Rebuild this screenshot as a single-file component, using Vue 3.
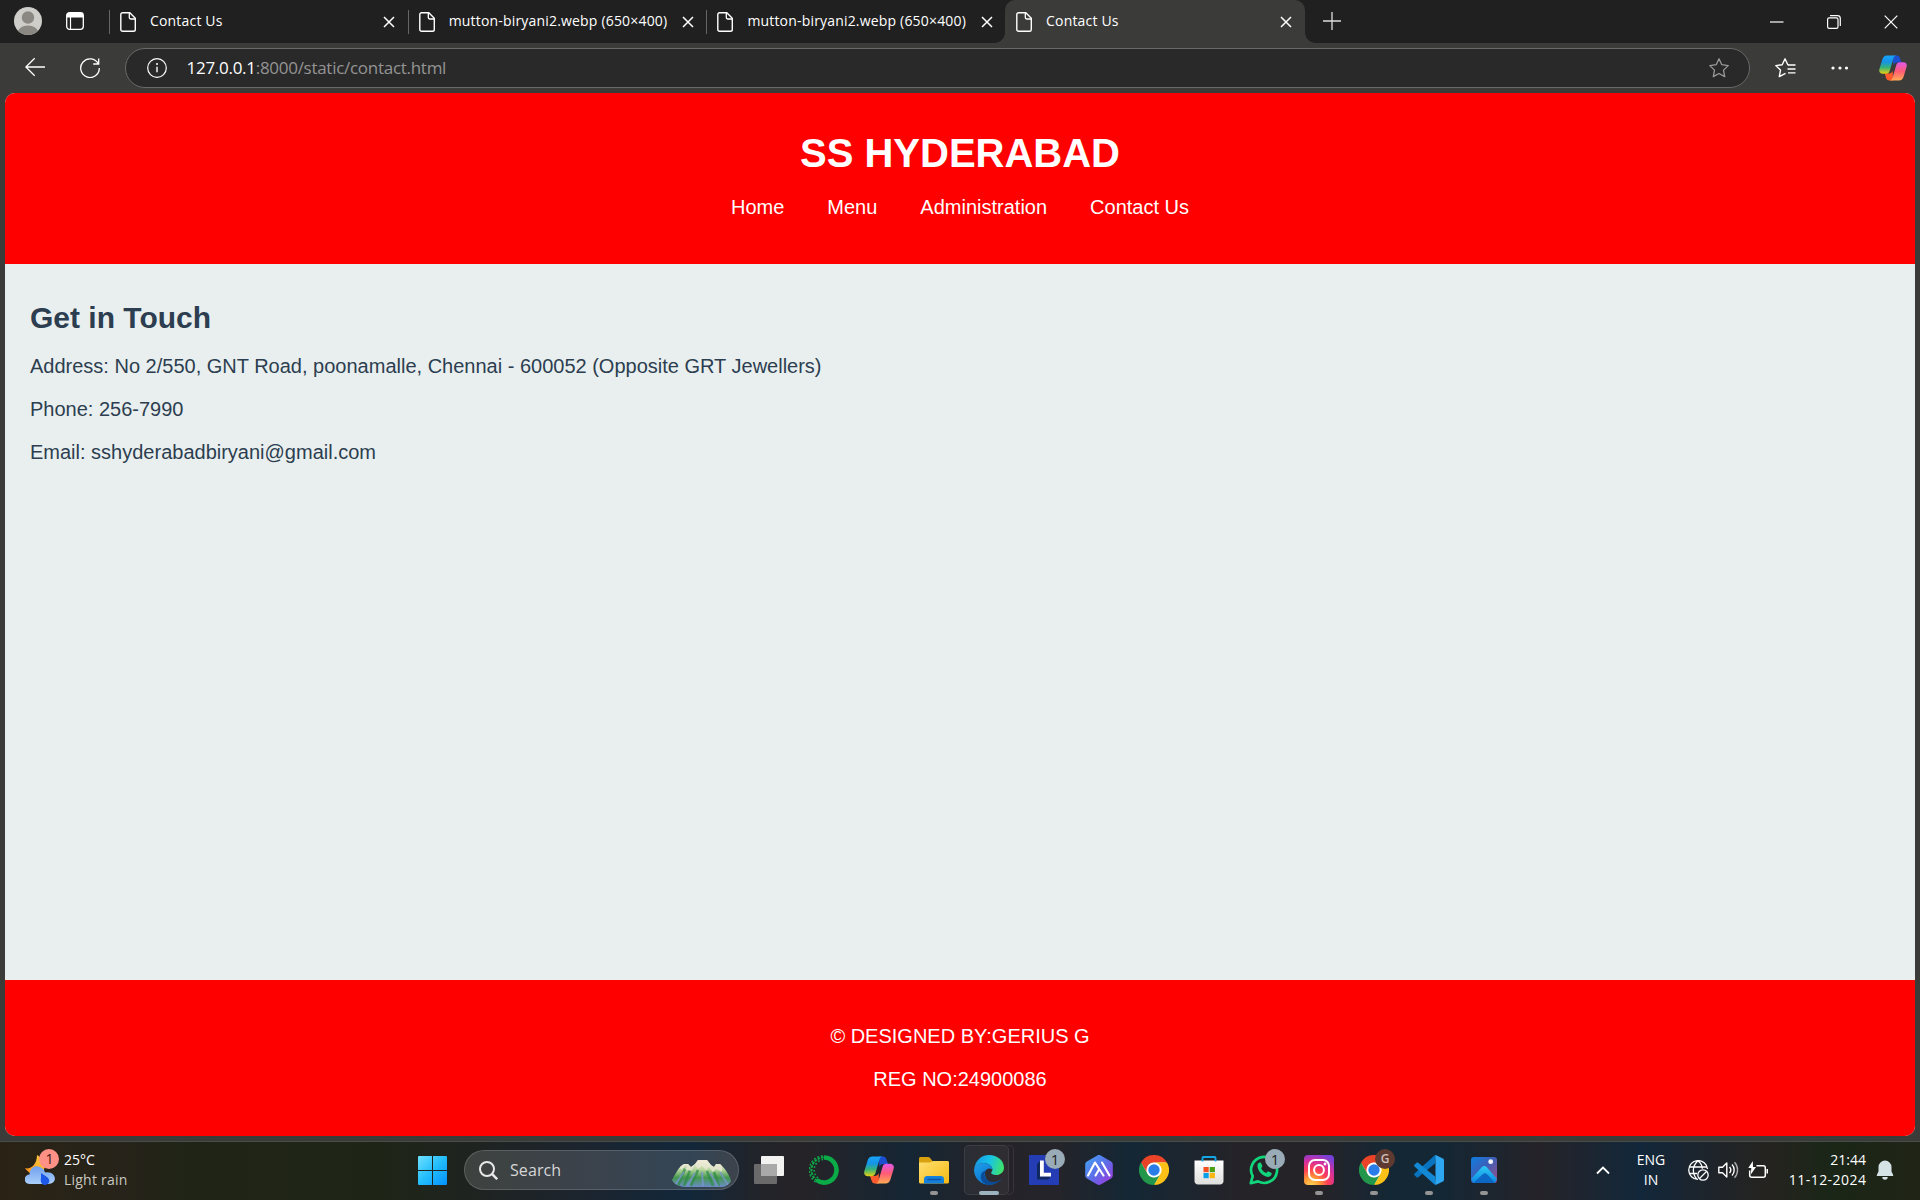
<script setup>
const tabs = [
  { title: 'Contact Us', short: true },
  { title: 'mutton-biryani2.webp (650×400)' },
  { title: 'mutton-biryani2.webp (650×400)' },
  { title: 'Contact Us', short: true, active: true },
]
const links = ['Home', 'Menu', 'Administration', 'Contact Us']
const details = [
  'Address: No 2/550, GNT Road, poonamalle, Chennai - 600052 (Opposite GRT Jewellers)',
  'Phone: 256-7990',
  'Email: sshyderabadbiryani@gmail.com',
]
const apps = [
  { id: 'taskview' },
  { id: 'ring' },
  { id: 'copilot' },
  { id: 'folder', open: true },
  { id: 'edge', active: true },
  { id: 'lapp', badge: '1' },
  { id: 'hex' },
  { id: 'chrome' },
  { id: 'store' },
  { id: 'whatsapp', badge: '1' },
  { id: 'instagram', open: true },
  { id: 'chrome', open: true, badge: 'G', brown: true },
  { id: 'vscode', open: true },
  { id: 'photos', open: true },
]
</script>

<template>
  <div class="screen">
    <svg class="defs" width="0" height="0" aria-hidden="true">
      <defs>
        <linearGradient id="cpA" x1="0" y1="0" x2="0" y2="1">
          <stop offset="0" stop-color="#18a4f8" /><stop offset=".35" stop-color="#1593e8" />
          <stop offset=".65" stop-color="#35b37a" /><stop offset="1" stop-color="#e8cf10" />
        </linearGradient>
        <linearGradient id="cpB" x1="0" y1="1" x2="0" y2="0">
          <stop offset="0" stop-color="#ffac55" /><stop offset=".5" stop-color="#ff5c74" />
          <stop offset="1" stop-color="#e058e8" />
        </linearGradient>
        <linearGradient id="winG" x1="0" y1="0" x2="1" y2="1">
          <stop offset="0" stop-color="#6fe0ff" /><stop offset=".5" stop-color="#22bdfc" /><stop offset="1" stop-color="#0491ff" />
        </linearGradient>
        <linearGradient id="foldG" x1="0" y1="0" x2="1" y2="1">
          <stop offset="0" stop-color="#ffdf70" /><stop offset="1" stop-color="#f4b913" />
        </linearGradient>
        <linearGradient id="edgeA" x1="0" y1=".3" x2="1" y2=".5">
          <stop offset="0" stop-color="#1698e8" /><stop offset=".5" stop-color="#18c3e6" />
          <stop offset="1" stop-color="#3fe36a" />
        </linearGradient>
        <linearGradient id="edgeB" x1="0" y1="0" x2=".6" y2="1">
          <stop offset="0" stop-color="#1fa0ea" /><stop offset="1" stop-color="#0a6fcc" />
        </linearGradient>
        <linearGradient id="hexG" x1="0" y1="0" x2="1" y2="1">
          <stop offset="0" stop-color="#42a8f5" /><stop offset=".5" stop-color="#5c6ee8" />
          <stop offset="1" stop-color="#a632dd" />
        </linearGradient>
        <linearGradient id="storeG" x1="0" y1="0" x2="0" y2="1">
          <stop offset="0" stop-color="#ffffff" /><stop offset="1" stop-color="#dededc" />
        </linearGradient>
        <radialGradient id="instaG" cx=".25" cy="1.02" r="1.1">
          <stop offset="0" stop-color="#ffd65c" /><stop offset=".25" stop-color="#ff9a35" />
          <stop offset=".5" stop-color="#ff3e55" /><stop offset=".75" stop-color="#d42f9f" />
          <stop offset="1" stop-color="#7940d8" />
        </radialGradient>
        <linearGradient id="photoG" x1="0" y1="0" x2="1" y2="1">
          <stop offset="0" stop-color="#0c7ee0" /><stop offset=".45" stop-color="#3c5fb9" />
          <stop offset="1" stop-color="#a04e85" />
        </linearGradient>
        <linearGradient id="hillG" x1="0" y1="0" x2="0" y2="1">
          <stop offset="0" stop-color="#2ecaf2" /><stop offset="1" stop-color="#0b86e4" />
        </linearGradient>
        <linearGradient id="cloudG" x1="0" y1="0" x2="0" y2="1">
          <stop offset="0" stop-color="#6f9fee" /><stop offset="1" stop-color="#a9cffb" />
        </linearGradient>
        <linearGradient id="mtG" x1="0" y1="0" x2="0" y2="1">
          <stop offset="0" stop-color="#f4f0dc" /><stop offset=".35" stop-color="#b8d6a0" />
          <stop offset=".65" stop-color="#45984f" /><stop offset="1" stop-color="#6b8cc8" />
        </linearGradient>
        <clipPath id="mtClip"><path d="M0 20C3 14 6 9 9 6l3-2h4l3 3 4-3 3-4h9l4 5 3 2 2-3h4l4 4c3 4 6 8 7 13-2 4-6 6-10 6H12C6 26 2 24 0 20z" /></clipPath>
        <linearGradient id="moonG" x1="0" y1="1" x2="1" y2="0">
          <stop offset="0" stop-color="#ff8d1c" /><stop offset="1" stop-color="#ffd23a" />
        </linearGradient>
        <clipPath id="avClip"><circle cx="14" cy="14" r="14" /></clipPath>

        <symbol id="i-doc" viewBox="0 0 16 20">
          <path d="M2.6.7h7.2l5.5 5.6v11.2c0 1-.8 1.8-1.8 1.8H2.6c-1 0-1.8-.8-1.8-1.8v-15C.8 1.500 1.600.7 2.6.7z" fill="none" stroke="#fff" stroke-width="1.400" />
          <path d="M9.300 1v4.600c0 .8.5 1.400 1.400 1.400h4.400" fill="none" stroke="#fff" stroke-width="1.300" />
        </symbol>
        <symbol id="i-x" viewBox="0 0 12 12">
          <path d="M1 1l10 10M11 1L1 11" stroke="#fff" stroke-width="1.500" />
        </symbol>

        <symbol id="i-copilot" viewBox="0 0 30 28">
          <path d="M15 .5h4c2 0 3 1 3.500 3L24 8h-4.500c-2 0-3.500 1-4.200 3z" fill="#1c4fd0" />
          <path d="M15 27.500h-4c-2 0-3-1-3.500-3L6 20h4.500c2 0 3.500-1 4.200-3z" fill="#fb5a2c" />
          <path d="M8.500.5H19c-2 0-3 1-3.700 3.500L11.500 17c-.6 2-1.700 3.200-4 3.200H4c-3 0-4.500-2-3.600-5.200L3.600 4.500C4.400 2 6 .5 8.500.5z" fill="url(#cpA)" />
          <path d="M21.500 27.500H11c2 0 3-1 3.700-3.500L18.500 11c.6-2 1.700-3.200 4-3.200H26c3 0 4.500 2 3.600 5.200l-3.200 10.500c-.8 2.500-2.400 4-4.900 4z" fill="url(#cpB)" />
        </symbol>

        <symbol id="i-taskview" viewBox="0 0 30 30">
          <rect x="7" y="1" width="23" height="20" rx="1" fill="#f2f2f0" />
          <rect x="0" y="9" width="23" height="20" rx="1" fill="#777" fill-opacity=".85" />
          <rect x="7" y="9" width="16" height="12" fill="#a9a9a9" />
        </symbol>
        <symbol id="i-ring" viewBox="0 0 30 30">
          <path d="M15 2.500A12.500 12.500 0 1 1 7.500 25" fill="none" stroke="#0bab47" stroke-width="4.600" />
          <path d="M8 25.400A12.500 12.500 0 0 1 15 2.500" fill="none" stroke="#0bab47" stroke-width="2" stroke-dasharray="2.500 1.100" />
          <path d="M6.600 27A14.300 14.300 0 0 1 15 .9" fill="none" stroke="#0bab47" stroke-width="1.500" stroke-dasharray="2 1.700" />
          <path d="M9 23A10.500 10.500 0 0 1 14 4.500" fill="none" stroke="#0bab47" stroke-width="1.500" stroke-dasharray="1.700 2" />
        </symbol>
        <symbol id="i-folder" viewBox="0 0 30 30">
          <path d="M0 3.500C0 2.700.7 2 1.500 2h7.700c.7 0 1.200.3 1.700.8L13.500 6v6H0z" fill="#d9a010" />
          <path d="M0 7.500h11l3-1.500h14.500c.8 0 1.500.7 1.500 1.500V27c0 .8-.7 1.500-1.500 1.500h-27C.7 28.500 0 27.800 0 27z" fill="url(#foldG)" />
          <path d="M5 28.500V24c0-1.700 1.300-3 3-3h14c1.700 0 3 1.300 3 3v4.500z" fill="#1480dc" />
          <path d="M9 24.500h12.500" stroke="#0b55a4" stroke-width="1.400" stroke-linecap="round" />
        </symbol>
        <symbol id="i-edge" viewBox="0 0 30 30">
          <path d="M.2 15C.8 6 7 0 15 0c8.600 0 15 5.700 15 12.700 0 4.300-3.500 7.300-7.900 7.300-3.300 0-5-1.200-5-2.200 0-.6 1.300-1.300 1.300-3.300C18.400 11 14.500 8 9.800 8 4.500 8 1 11 .2 15z" fill="url(#edgeA)" />
          <path d="M0 15.500C.3 10.800 4.600 8 9.800 8c4.700 0 8.600 3 8.600 6.500 0 0-1.200-1.300-3.400-1.100-3 .3-4.600 3.200-4 6.600.8 5 5.800 9.600 10.500 8.400A15 15 0 0 1 0 15.500z" fill="url(#edgeB)" />
          <path d="M11.900 15.200c-3.600 5.800.8 11.800 7.600 11.800 3.300 0 6-1.200 8.300-3.700C25.700 27.200 21 30 15 30 8.500 29 6 24 7 20c.6-2.500 2.400-4.200 4.900-4.800z" fill="#0b4c97" />
        </symbol>
        <symbol id="i-lapp" viewBox="0 0 30 30">
          <rect width="30" height="30" fill="#243db4" />
          <path d="M11 6L8 9v15.500h11l3-3H11z" fill="#10275f" />
          <path d="M11 5.500h3.800v12.200H22v3.800H11z" fill="#fff" />
        </symbol>
        <symbol id="i-hex" viewBox="0 0 30 30">
          <path d="M13.300.5c1-.6 2.400-.6 3.400 0l10.400 6c1 .6 1.700 1.700 1.700 2.900v11.200c0 1.200-.7 2.300-1.700 2.900l-10.400 6c-1 .6-2.400.6-3.400 0l-10.400-6c-1-.6-1.700-1.700-1.700-2.900V9.400c0-1.200.7-2.300 1.700-2.900z" fill="url(#hexG)" />
          <path d="M4 20.500L11 7.500l8.500 13M11.500 20.500l3.500-6M18 7.500l7.500 13" fill="none" stroke="#fff" stroke-width="2.100" stroke-linecap="round" stroke-linejoin="round" />
        </symbol>
        <symbol id="i-chrome" viewBox="-15 -15 30 30">
          <circle r="14" fill="#fff" />
          <path d="M-13-7.500A15 15 0 0 1 13-7.500H0A7.500 7.500 0 0 0-6.500 3.750z" fill="#ea4328" />
          <path d="M-13-7.500A15 15 0 0 1 13-7.500H0A7.500 7.500 0 0 0-6.500 3.750z" fill="#fbc116" transform="rotate(120)" />
          <path d="M-13-7.500A15 15 0 0 1 13-7.500H0A7.500 7.500 0 0 0-6.500 3.750z" fill="#22964a" transform="rotate(240)" />
          <circle r="7.200" fill="#fff" /><circle r="5.700" fill="#2a7de9" />
        </symbol>
        <symbol id="i-store" viewBox="0 0 30 30">
          <path d="M.5 5.500h29V26c0 2-1.500 3.500-3.500 3.500H4C2 29.500.5 28 .5 26z" fill="url(#storeG)" />
          <path d="M8.500 6.500V3c0-.6.4-1 1-1h11c.6 0 1 .4 1 1v3.500" fill="none" stroke="#15a6e8" stroke-width="1.900" />
          <path d="M9.500 12h5.200v5.200H9.500z" fill="#f05022" /><path d="M15.700 12h5.200v5.200h-5.200z" fill="#4aa010" />
          <path d="M9.500 18h5.200v5.200H9.500z" fill="#089fe8" /><path d="M15.700 18h5.200v5.200h-5.200z" fill="#fbb710" />
        </symbol>
        <symbol id="i-whatsapp" viewBox="0 0 30 30">
          <path d="M1.800 28.200l1.900-7A13 13 0 1 1 9 26.400z" fill="none" stroke="#10d57b" stroke-width="2.700" stroke-linejoin="round" />
          <path d="M8.500 10c.2-1.500 1.500-2.800 2.600-2.600.6 0 .9.400 1.100.9l1.100 2.600c.3.8-.9 1.800-1.200 2.300 1.200 2.300 2.800 3.800 5.200 4.800.6-.4 1.400-1.900 2.200-1.600l2.700 1.400c.8.4.4 1.900-.2 2.700-1 1.300-3 1.800-5 1.100C12.300 20 8 14.500 8.500 10z" fill="#10d57b" />
        </symbol>
        <symbol id="i-instagram" viewBox="0 0 30 30">
          <rect width="30" height="30" rx="4" fill="url(#instaG)" />
          <rect x="5" y="5" width="20" height="20" rx="6" fill="none" stroke="#fff" stroke-width="2" />
          <circle cx="15" cy="15" r="4.900" fill="none" stroke="#fff" stroke-width="2" />
          <circle cx="21" cy="9" r="1.400" fill="#fff" />
        </symbol>
        <symbol id="i-vscode" viewBox="0 0 30 30">
          <path d="M21 8.500L4.200 22.300c-.5.4-1.200.4-1.600 0L.5 20.300c-.5-.5-.5-1.200 0-1.700L20.500.6 22 1z" fill="#0874bf" />
          <path d="M21 21.500L4.200 7.700c-.5-.4-1.200-.4-1.600 0L.5 9.700c-.5.5-.5 1.200 0 1.700L20.500 29.400 22 29z" fill="#1389d6" />
          <path d="M20.500.5c.5-.4 1.100-.5 1.700-.2l6.700 3.200c.7.300 1.100 1 1.100 1.700v19.600c0 .7-.4 1.400-1.100 1.700l-6.700 3.200c-.6.3-1.200.2-1.700-.2.4.3 1-.1 1-.8V1.300c0-.7-.6-1.100-1-.8z" fill="#2da7f2" />
        </symbol>
        <symbol id="i-photos" viewBox="0 0 30 30">
          <rect x="2" y="2" width="26" height="26" rx="3" fill="url(#photoG)" />
          <path d="M2.500 23.500L12.800 12.300c1.500-1.600 3.500-1.600 5 0l9.900 11.200c-.2 3-1.500 4.500-4.200 4.500H6.500c-2.700 0-3.800-1.500-4-4.500z" fill="url(#hillG)" />
          <path d="M5 27.500l9-8.600c1.200-1 2.600-1 3.800 0l8 8.600c-.6.4-1.400.5-2.300.5h-17c-.6 0-1-.2-1.500-.5z" fill="#0c68c4" />
          <circle cx="21.700" cy="6.700" r="2.400" fill="#f3f7fb" />
        </symbol>
      </defs>
    </svg>

    <header class="titlebar">
      <svg class="avatar" width="28" height="28" viewBox="0 0 28 28">
        <g clip-path="url(#avClip)">
          <rect width="28" height="28" fill="#cfcdc9" />
          <circle cx="14" cy="10.500" r="6.200" fill="#8b8883" />
          <ellipse cx="14" cy="26" rx="10.500" ry="7.500" fill="#8b8883" />
        </g>
      </svg>
      <svg class="workspaces" width="18" height="18" viewBox="0 0 18 18">
        <rect x=".7" y=".7" width="16.600" height="16.600" rx="2.800" fill="none" stroke="#fff" stroke-width="1.300" />
        <path d="M.7 5.500V3.500A2.800 2.800 0 0 1 3.500.7h11a2.800 2.800 0 0 1 2.800 2.800v2z" fill="#fff" />
        <path d="M4.500 5v12" stroke="#fff" stroke-width="1.200" />
      </svg>
      <div class="tabs">
        <div v-for="(t, i) in tabs" :key="i" class="tab" :class="{ active: t.active }">
          <svg class="doc" width="16" height="20"><use href="#i-doc" /></svg>
          <span class="tab-title" :class="{ short: t.short }">{{ t.title }}</span>
          <svg class="tab-x" width="12" height="12"><use href="#i-x" /></svg>
        </div>
      </div>
      <svg class="plus" width="18" height="18" viewBox="0 0 18 18"><path d="M9 0v18M0 9h18" stroke="#ddd" stroke-width="1.300" /></svg>
      <div class="window-buttons">
        <svg width="14" height="14" viewBox="0 0 14 14"><path d="M0 7h13.500" stroke="#fff" stroke-width="1.200" /></svg>
        <svg width="14" height="14" viewBox="0 0 14 14" fill="none" stroke="#fff" stroke-width="1.200">
          <rect x=".6" y="2.900" width="10.400" height="10.400" rx="1.600" />
          <path d="M3 .7h7.500a2.800 2.800 0 0 1 2.800 2.800V11" />
        </svg>
        <svg width="14" height="14" viewBox="0 0 14 14"><path d="M.7.7l12.600 12.600M13.300.7L.7 13.300" stroke="#fff" stroke-width="1.200" /></svg>
      </div>
    </header>

    <div class="toolbar">
      <svg class="back" width="20" height="20" viewBox="0 0 20 20" fill="none" stroke="#fff" stroke-width="1.300">
        <path d="M20 10H.9M9.700 1.200L.9 10l8.800 8.800" />
      </svg>
      <svg class="reload" width="20" height="20" viewBox="0 0 20 20" fill="none" stroke="#fff" stroke-width="1.300">
        <path d="M18.300 6A9.300 9.300 0 1 0 19.300 10M18.700.5V6h-5.500" />
      </svg>
      <div class="omnibox">
        <svg class="info" width="20" height="20" viewBox="0 0 20 20">
          <circle cx="10" cy="10" r="9.300" fill="none" stroke="#fff" stroke-width="1.200" />
          <path d="M10 8.800v5.400" stroke="#fff" stroke-width="1.400" /><circle cx="10" cy="6" r="1" fill="#fff" />
        </svg>
        <span class="url"><b>127.0.0.1</b>:8000/static/contact.html</span>
        <svg class="star" width="20" height="20" viewBox="0 0 20 20" fill="none" stroke="#999" stroke-width="1.300" stroke-linejoin="round">
          <path d="M10 .8l2.800 5.900 6.400.9-4.700 4.500 1.200 6.500L10 15.500l-5.700 3.100 1.200-6.500L.8 7.600l6.400-.9z" />
        </svg>
      </div>
      <svg class="favs" width="21" height="20" viewBox="0 0 21 20" fill="none" stroke="#fff" stroke-width="1.400" stroke-linejoin="round">
        <path d="M13.500 6.700h-.7L10 .8 7.200 6.700l-6.400.9 4.700 4.500-1.200 6.500 6.200-3.200" />
        <path d="M13 7h7.500M12.500 11h8M13 14.800h7.500" stroke-width="1.300" />
      </svg>
      <svg class="dots" width="18" height="4" viewBox="0 0 18 4" fill="#fff">
        <circle cx="2" cy="2" r="1.600" /><circle cx="9" cy="2" r="1.600" /><circle cx="15.500" cy="2" r="1.600" />
      </svg>
      <svg class="copilot" width="28" height="26"><use href="#i-copilot" /></svg>
    </div>

    <div class="page-frame">
      <div class="page">
        <div class="hero">
          <h1>SS HYDERABAD</h1>
          <nav><a v-for="l in links" :key="l">{{ l }}</a></nav>
        </div>
        <main>
          <h2>Get in Touch</h2>
          <p v-for="d in details" :key="d">{{ d }}</p>
        </main>
        <footer>
          <p>© DESIGNED BY:GERIUS G</p>
          <p>REG NO:24900086</p>
        </footer>
      </div>
    </div>

    <div class="taskbar">
      <div class="weather">
        <svg width="36" height="40" viewBox="0 0 36 40">
          <path d="M0 20c5 2 12-3 12-13 5 3 9 8 7 15-3 5-12 8-19-2z" fill="url(#moonG)" />
          <path d="M5 36c-7 0-7-9-.5-9.500C5 19 11 17 15 19c3 1 4.500 3 5 5.500C31 22 34 36 23 36z" fill="url(#cloudG)" />
          <path d="M16 25l6 4c5 4 1 8-2 8s-5-3-4-7z" fill="#1d59e8" />
          <circle cx="24" cy="11" r="10" fill="#ff9086" />
          <text x="24.500" y="16" text-anchor="middle" class="badge-text">1</text>
        </svg>
        <div class="weather-text"><span>25°C</span><span class="dim">Light rain</span></div>
      </div>
      <svg class="start" width="29" height="29" viewBox="0 0 29 29" fill="url(#winG)">
        <path d="M1 0h13v14H0V1q0-1 1-1zM15 0h13q1 0 1 1v13H15zM0 15h14v14H1q-1 0-1-1zM15 15h14v13q0 1-1 1H15z" />
      </svg>
      <div class="search">
        <svg class="mag" width="19" height="19" viewBox="0 0 19 19" fill="none" stroke="#e8e8e8" stroke-width="2">
          <circle cx="8" cy="8" r="7" /><path d="M12.700 12.700l5.500 5.500" stroke-width="2.500" />
        </svg>
        <span>Search</span>
        <svg class="mountain" width="60" height="27" viewBox="0 0 60 27">
          <g clip-path="url(#mtClip)">
            <rect width="60" height="27" fill="url(#mtG)" />
            <path d="M14 6L6 26M18 10l-6 16M26 10l-7 16M42 12l5 14M35 11l6 15" stroke="#2f8a44" stroke-width="2.500" opacity=".7" />
            <path d="M12 12L3 25M23 13l-8 13M30 12l1 14M38 13l8 13M48 12l8 13" stroke="#7a95cf" stroke-width="2" opacity=".75" />
            <path d="M8 9l4-1 3 2 4 1 4-6 3 4 4-3 4 4 3-3 4 5 3-3 6 3V0H8z" fill="#efead9" opacity=".7" />
          </g>
        </svg>
      </div>
      <div class="apps">
        <div v-for="(a, i) in apps" :key="i" class="app" :class="{ current: a.active }">
          <svg class="app-icon" width="30" height="30"><use :href="'#i-' + a.id" /></svg>
          <span v-if="a.badge" class="badge" :class="{ brown: a.brown }">{{ a.badge }}</span>
          <i v-if="a.open || a.active" class="mark"></i>
        </div>
      </div>
      <svg class="chevron" width="14" height="9" viewBox="0 0 14 9"><path d="M1 7.500l6-6 6 6" fill="none" stroke="#fff" stroke-width="1.800" /></svg>
      <div class="lang"><span>ENG</span><span>IN</span></div>
      <div class="tray">
        <svg width="21" height="21" viewBox="0 0 21 21" fill="none" stroke="#fff" stroke-width="1.300">
          <path d="M19.500 9A9.400 9.400 0 1 0 10 19.400M1.500 7h17M1.500 13.500H9M10 .8C4 6 4 14 9 19.400M10 .8c3 2.500 4.300 5 4.300 8" />
          <circle cx="15" cy="15" r="5.200" /><path d="M11.500 18.500l7-7" />
        </svg>
        <svg width="21" height="18" viewBox="0 0 21 18" fill="none" stroke="#fff" stroke-width="1.400" stroke-linejoin="round">
          <path d="M.8 6.200h3.700L8.800 2v14l-4.300-4.200H.8zM11.500 6a4.500 4.500 0 0 1 0 6M14 3.500a8 8 0 0 1 0 11" />
          <path d="M16.500 1.200a11.500 11.500 0 0 1 0 15.600" stroke="#aaa" />
        </svg>
        <svg width="21" height="18" viewBox="0 0 21 18" fill="none" stroke="#fff" stroke-width="1.500">
          <path d="M8.500 4.700h6.800a2 2 0 0 1 2 2v7.600a2 2 0 0 1-2 2H3.700a2 2 0 0 1-2-2V9.500" />
          <path d="M18.500 8h1.500v4.500h-1.500z" fill="#fff" stroke="none" />
          <path d="M4.800 0L.3 7h3L2.800 13.500 8 6H5z" fill="#fff" stroke="none" />
        </svg>
      </div>
      <div class="clock"><span class="time">21:44</span><span class="date">11-12-2024</span></div>
      <svg class="bell" width="18" height="20" viewBox="0 0 18 20" fill="#d5e2e6">
        <path d="M9 .5a6.500 6.500 0 0 0-6.500 6.500v4.500L.8 15c-.2.600.1 1 .7 1h15c.6 0 .9-.4.700-1l-1.700-3.500V7A6.500 6.500 0 0 0 9 .5zM6.300 17h5.400a2.700 2.700 0 0 1-5.400 0z" />
      </svg>
    </div>
  </div>
</template>

<style>
body { margin: 0; overflow: hidden; background: #3b3a38; }
</style>

<style scoped>
.screen {
  width: 1920px; height: 1200px; display: flex; flex-direction: column;
  overflow: hidden; background: #3b3b39; color: #fff;
  font-family: "Open Sans", "Noto Sans", sans-serif;
}
.defs { position: absolute; }
svg { display: block; flex: none; }

.titlebar { height: 43px; background: #202020; display: flex; align-items: center; flex: none; }
.avatar { margin-left: 14px; margin-top: -1px; }
.workspaces { margin-left: 24px; margin-top: -1px; }
.tabs { display: flex; margin-left: 25px; height: 43px; }
.tab {
  width: 298.700px; box-sizing: border-box; height: 43px; display: flex; align-items: center;
  position: relative; padding: 0 12.500px 0 11px;
}
.tab::before { content: ""; position: absolute; left: 0; top: 10px; width: 1px; height: 24px; background: #666; }
.tab.active { background: #3b3b39; border-radius: 10px 10px 0 0; width: 300px; padding-right: 13px; }
.tab.active::before, .tab.active::after {
  content: ""; position: absolute; top: auto; bottom: 0; width: 10px; height: 10px; background: none;
}
.tab.active::before { left: -10px; background: radial-gradient(circle at 0 0, transparent 9.500px, #3b3b39 10px); }
.tab.active::after { right: -10px; background: radial-gradient(circle at 100% 0, transparent 9.500px, #3b3b39 10px); }
.doc { margin-top: 1px; }
.tab-title { font-size: 14px; line-height: 20px; margin-left: 14px; margin-top: -2px; flex: 1; white-space: nowrap; letter-spacing: .18px; }
.tab-x { margin-top: 1px; }
.plus { margin-left: 18px; margin-top: -1px; }
.window-buttons { display: flex; gap: 43px; margin-left: auto; margin-right: 22px; }

.toolbar { height: 50px; display: flex; align-items: center; flex: none; }
.back { margin-left: 25px; margin-top: -2px; }
.reload { margin-left: 35px; }
.omnibox {
  margin-left: 25px; width: 1625px; height: 40px; box-sizing: border-box; border: 1px solid #696969;
  border-radius: 20px; background: #292929; display: flex; align-items: center; padding: 0 20px 0 21px;
}
.url { font-size: 17px; line-height: 24px; margin-left: 19.500px; color: #949494; flex: 1; margin-top: -1px; letter-spacing: -.28px; }
.url b { font-weight: 400; color: #fff; }
.favs { margin-left: 25px; }
.dots { margin-left: 35px; }
.copilot { margin-left: 30px; }

.page-frame { height: 1048px; padding: 0 5px 5px; box-sizing: border-box; flex: none; }
.page {
  height: 1043px; border-radius: 10px; overflow: hidden; background: #e9efef; display: flex;
  flex-direction: column; font-family: "Liberation Sans", Arial, sans-serif; font-size: 20px; line-height: 23px;
}
.hero { height: 171px; background: #f00; box-sizing: border-box; padding-top: 37px; text-align: center; }
h1 { margin: 0; font-size: 40px; line-height: 46px; font-weight: 700; }
nav { display: flex; justify-content: center; gap: 43px; margin-top: 20px; }
main { flex: 1; padding: 37px 25px 0; color: #2c3e50; }
h2 { margin: 0 0 20px; font-size: 30px; line-height: 34px; font-weight: 700; }
main p { margin: 0 0 20px; }
footer { height: 156px; box-sizing: border-box; background: #f00; text-align: center; padding-top: 45px; }
footer p { margin: 0 0 20px; }

.taskbar {
  height: 59px; flex: none; display: flex; align-items: center; border-top: 1px solid #474d48;
  box-sizing: border-box; padding-bottom: 2px;
  background: linear-gradient(90deg, #2a2315 0, #27231a 120px, #202417 190px, #1e2517 380px, #1f2320 470px, #1c242e 580px, #12273a 690px, #20242b 750px, #262327 800px, #152634 910px, #252328 990px, #24242a 1060px, #142735 1130px, #252328 1240px, #252328 1320px, #142735 1390px, #142735 1440px, #252328 1540px, #12273a 1640px, #1e242b 1710px, #25231f 1770px, #1a2617 1830px, #202417 1920px);
}
.weather { display: flex; margin-left: 25px; width: 393px; align-items: center; }
.weather svg { margin-top: -4px; }
.weather-text { display: flex; flex-direction: column; font-size: 14px; line-height: 20px; margin-left: 3px; margin-top: -1px; }
.dim { color: #c9c8c0; letter-spacing: .22px; }
.badge-text { font-size: 14px; fill: #3a1a18; }
.search {
  width: 275px; height: 40px; box-sizing: border-box; margin-left: 17px; border-radius: 20px;
  border: 1px solid #ffffff28; background: #ffffff24; display: flex; align-items: center; padding: 0 6px 0 14px;
}
.search span { font-size: 16px; color: #d6d6d6; margin-left: 12px; flex: 1; letter-spacing: .1px; }
.mountain { margin-top: 7px; }
.apps { display: flex; margin-left: 2.500px; }
.app { width: 55px; height: 56px; position: relative; display: flex; align-items: center; justify-content: center; }
.app-icon { position: relative; }
.current::before, .current::after {
  content: ""; position: absolute; top: 3px; height: 50px; box-sizing: border-box;
  border: 1px solid #ffffff14; background: #ffffff0c; border-radius: 5px;
}
.current::before { left: 2px; width: 45px; }
.current::after { left: 46px; width: 6px; border-left: 0; border-radius: 0 5px 5px 0; background: none; }
.badge {
  position: absolute; left: 28px; top: 7px; width: 20px; height: 20px; border-radius: 50%; margin-left: .5px;
  background: #98abb6; color: #1f2326; font-size: 15px; line-height: 20px; text-align: center;
}
.badge.brown { background: #5e3a30; color: #cfbfb9; font-size: 12px; font-weight: 600; }
.mark { position: absolute; left: 23.500px; bottom: 3px; width: 8px; height: 4px; border-radius: 2px; background: #949494; }
.current .mark { left: 17.500px; width: 20px; background: #9cb2bf; }
.chevron { margin-left: 84.500px; }
.lang { width: 50px; margin-left: 16px; display: flex; flex-direction: column; align-items: center; font-size: 14px; line-height: 20px; }
.tray { display: flex; align-items: center; gap: 9px; margin-left: 12px; }
.clock { width: 90px; display: flex; flex-direction: column; align-items: flex-end; font-size: 14px; line-height: 20px; margin-left: 7px; margin-top: -1px; }
.date { letter-spacing: .45px; margin-right: -.4px; }
.bell { margin-left: 10px; }
</style>
